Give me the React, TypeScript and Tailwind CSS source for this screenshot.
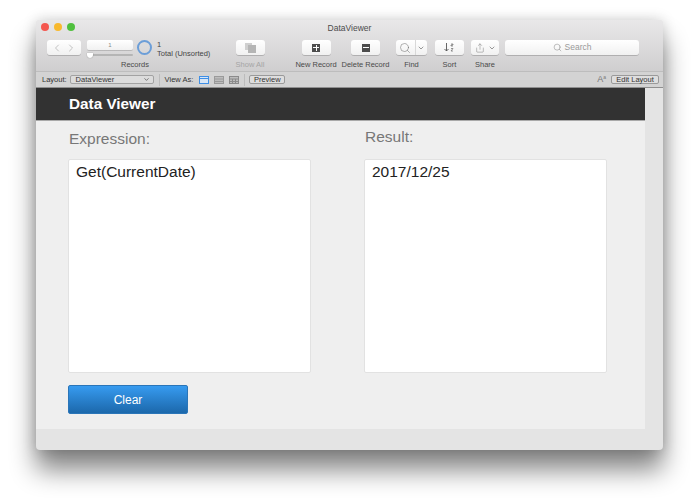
import { ChevronLeft, ChevronRight, ChevronDown, Search, Share } from "lucide-react";

const font = { fontFamily: '"Liberation Sans", Arial, sans-serif' };

function ToolItem({ label, width, dim, children }: { label: string; width: string; dim?: boolean; children: React.ReactNode }) {
  return (
    <div className={`flex flex-col items-center ${width}`}>
      <div className="flex h-[15px] items-center justify-center">{children}</div>
      <div className={`mt-[5px] whitespace-nowrap text-[7.5px] leading-[10px] ${dim ? "text-[#a5a5a5]" : "text-[#4a4a4a]"}`}>{label}</div>
    </div>
  );
}

function Btn({ className, children }: { className: string; children?: React.ReactNode }) {
  return (
    <div className={`flex h-[15px] items-center justify-center rounded-[3px] bg-gradient-to-b from-white to-[#f1f1f1] shadow-[0_1px_0_rgba(0,0,0,0.18)] ${className}`}>
      {children}
    </div>
  );
}

function TableIcon({ color, grid }: { color: string; grid?: boolean }) {
  return (
    <svg width="10" height="8" viewBox="0 0 10 8" fill="#bdbdbd" stroke={color} strokeWidth="1">
      <rect x="0.5" y="0.5" width="9" height="7" />
      <path d={grid ? "M0 3h10M0 5.5h10M3.5 3v5M6.5 3v5" : "M0 3h10M0 5.5h10"} />
    </svg>
  );
}

export default function App() {
  return (
    <div className="h-[502px] w-[699px] overflow-hidden bg-white pl-[36px] pt-[20px]" style={font}>
      <div className="flex h-[430px] w-[627px] flex-col overflow-hidden rounded-[4px] bg-[#e4e4e4] shadow-[0_20px_26px_rgba(0,0,0,0.48),0_0_14px_rgba(0,0,0,0.18)]">
        {/* title bar + toolbar */}
        <div className="h-[52px] shrink-0 border-b border-[#bdbdbd] bg-gradient-to-b from-[#e9e8e9] to-[#cfcecf]">
          <div className="relative flex h-[20px] items-center justify-center pb-[3px] text-[8.5px] text-[#4c4c4c]">
            <div className="absolute left-[5px] top-[3px] flex gap-[5px]">
              <span className="h-[8px] w-[8px] rounded-full bg-[#f4574f]" />
              <span className="h-[8px] w-[8px] rounded-full bg-[#f8b92e]" />
              <span className="h-[8px] w-[8px] rounded-full bg-[#50c03e]" />
            </div>
            DataViewer
          </div>
          <div className="flex items-start pl-[11px]">
            {/* records group */}
            <div className="flex w-[183px] shrink-0 flex-col">
              <div className="flex h-[15px] items-start">
                <Btn className="w-[34px] gap-[2px]">
                  <ChevronLeft size={12} strokeWidth={1.2} className="text-[#9c9c9c]" />
                  <ChevronRight size={12} strokeWidth={1.2} className="text-[#9c9c9c]" />
                </Btn>
                <div className="ml-[6px] flex w-[46px] flex-col">
                  <div className="flex h-[10px] items-center justify-center rounded-[2px] bg-gradient-to-b from-white to-[#f1f1f1] text-[6px] text-[#8a8a8a] shadow-[0_1px_0_rgba(0,0,0,0.15)]">1</div>
                  <div className="relative mt-[4px] h-[2px] rounded bg-[#b5b5b5]">
                    <span className="absolute -top-[1px] left-[0px] h-[5px] w-[6px] rounded-b-full bg-white shadow-[0_0_1px_rgba(0,0,0,0.5)]" />
                  </div>
                </div>
                <div className="ml-[4px] h-[15px] w-[15px] rounded-full border-2 border-[#6c9ed8]" />
                <div className="ml-[5px] whitespace-nowrap text-[7.5px] leading-[9px] text-[#444]">
                  <div>1</div>
                  <div>Total (Unsorted)</div>
                </div>
              </div>
              <div className="ml-[40px] mt-[5px] w-[96px] text-center text-[7.5px] leading-[10px] text-[#4a4a4a]">Records</div>
            </div>
            <ToolItem label="Show All" width="w-[40px]" dim>
              <Btn className="w-[29px]">
                <svg width="11" height="10" viewBox="0 0 11 10">
                  <rect x="0" y="0" width="7" height="7" fill="#cfcfcf" />
                  <rect x="3" y="2" width="8" height="8" fill="#b5b5b5" />
                </svg>
              </Btn>
            </ToolItem>
            <ToolItem label="New Record" width="w-[40px] ml-[26px]">
              <Btn className="w-[29px]">
                <span className="relative flex h-[8px] w-[8px] items-center justify-center bg-[#4d4d4d]">
                  <span className="absolute h-[1px] w-[6px] bg-white" />
                  <span className="absolute h-[6px] w-[1px] bg-white" />
                </span>
              </Btn>
            </ToolItem>
            <ToolItem label="Delete Record" width="w-[49px] ml-[5px]">
              <Btn className="w-[29px]">
                <span className="flex h-[8px] w-[8px] items-center justify-center bg-[#4d4d4d]">
                  <span className="h-[1px] w-[6px] bg-white" />
                </span>
              </Btn>
            </ToolItem>
            <ToolItem label="Find" width="w-[31px] ml-[6px]">
              <Btn className="w-[31px]">
                <Search size={12} strokeWidth={1} className="text-[#666]" />
                <span className="ml-[4px] h-[15px] w-px bg-[#d8d8d8]" />
                <ChevronDown size={8} strokeWidth={2} className="ml-[1px] text-[#666]" />
              </Btn>
            </ToolItem>
            <ToolItem label="Sort" width="w-[29px] ml-[8px]">
              <Btn className="w-[29px]">
                <svg width="11" height="9" viewBox="0 0 11 9" fill="none" stroke="#555" strokeWidth="0.9">
                  <path d="M2.5 0v8M0.5 6l2 2 2-2" />
                  <path d="M7 1h2v1H7v1h2M7 5.5h2L7 8h2" strokeWidth="0.6" />
                </svg>
              </Btn>
            </ToolItem>
            <ToolItem label="Share" width="w-[28px] ml-[7px]">
              <Btn className="w-[28px]">
                <Share size={10} strokeWidth={1} className="text-[#666]" />
                <ChevronDown size={8} strokeWidth={2} className="ml-[3px] text-[#666]" />
              </Btn>
            </ToolItem>
            <Btn className="ml-[6px] w-[134px] gap-[3px] text-[8.5px] text-[#9a9a9a]">
              <Search size={9} strokeWidth={1.2} className="text-[#777]" />
              Search
            </Btn>
          </div>
        </div>
        {/* status bar */}
        <div className="flex h-[16px] shrink-0 items-center border-b border-[#8f8f8f] bg-[#d3d3d3] pl-[6px] pr-[4px] text-[7.5px] text-[#333]">
          <span>Layout:</span>
          <div className="ml-[3px] flex h-[9px] w-[84px] items-center justify-between rounded-[2px] border border-[#a2a2a2] bg-[#dcdcdc] pl-[5px] pr-[3px]">
            <span>DataViewer</span>
            <ChevronDown size={7} strokeWidth={2} />
          </div>
          <span className="ml-[5px] h-[12px] w-px bg-[#bcbcbc]" />
          <span className="ml-[5px]">View As:</span>
          <div className="ml-[6px] flex items-center gap-[5px]">
            <svg width="10" height="8" viewBox="0 0 10 8" fill="#d8e6f6" stroke="#3f8fe6" strokeWidth="1">
              <rect x="0.5" y="0.5" width="9" height="7" />
              <path d="M0 2.5h10" />
            </svg>
            <TableIcon color="#9a9a9a" />
            <TableIcon color="#8b8b8b" grid />
          </div>
          <span className="ml-[5px] h-[12px] w-px bg-[#bcbcbc]" />
          <div className="ml-[4px] flex h-[9px] w-[36px] items-center justify-center rounded-[2px] border border-[#9a9a9a] bg-[#dedede]">Preview</div>
          <span className="ml-auto text-[9px] text-[#777]">A<sup className="text-[5px]">a</sup></span>
          <div className="ml-[5px] flex h-[9px] w-[48px] items-center justify-center rounded-[2px] border border-[#9a9a9a] bg-[#dedede]">Edit Layout</div>
        </div>
        {/* body */}
        <div className="flex min-h-0 flex-1 flex-col pr-[18px] pb-[21px]">
          <div className="flex h-[33px] shrink-0 items-center border-b border-[#a9a9a9] bg-[#323232] pl-[33px] text-[15.3px] font-bold text-white">
            Data Viewer
          </div>
          <div className="flex flex-1 flex-col bg-[#efefef] pl-[32px]">
            <div className="flex gap-[53px]">
              <div className="flex w-[243px] flex-col">
                <div className="ml-[1px] mt-[8px] h-[30px] text-[15.5px] leading-[19px] text-[#777]">Expression:</div>
                <div className="h-[214px] rounded-[2px] border border-[#e2e2e2] bg-white px-[7px] py-[2px] text-[15.5px] leading-[19px] text-[#222]">Get(CurrentDate)</div>
              </div>
              <div className="flex w-[243px] flex-col">
                <div className="ml-[1px] mt-[6px] h-[32px] text-[15.5px] leading-[19px] text-[#777]">Result:</div>
                <div className="h-[214px] rounded-[2px] border border-[#e2e2e2] bg-white px-[7px] py-[2px] text-[15.5px] leading-[19px] text-[#222]">2017/12/25</div>
              </div>
            </div>
            <button className="mt-[12px] h-[29px] w-[120px] rounded-[2px] border border-[#2a75b8] bg-gradient-to-b from-[#379bf0] to-[#1c68ab] text-[12px] text-white">Clear</button>
          </div>
        </div>
      </div>
    </div>
  );
}
